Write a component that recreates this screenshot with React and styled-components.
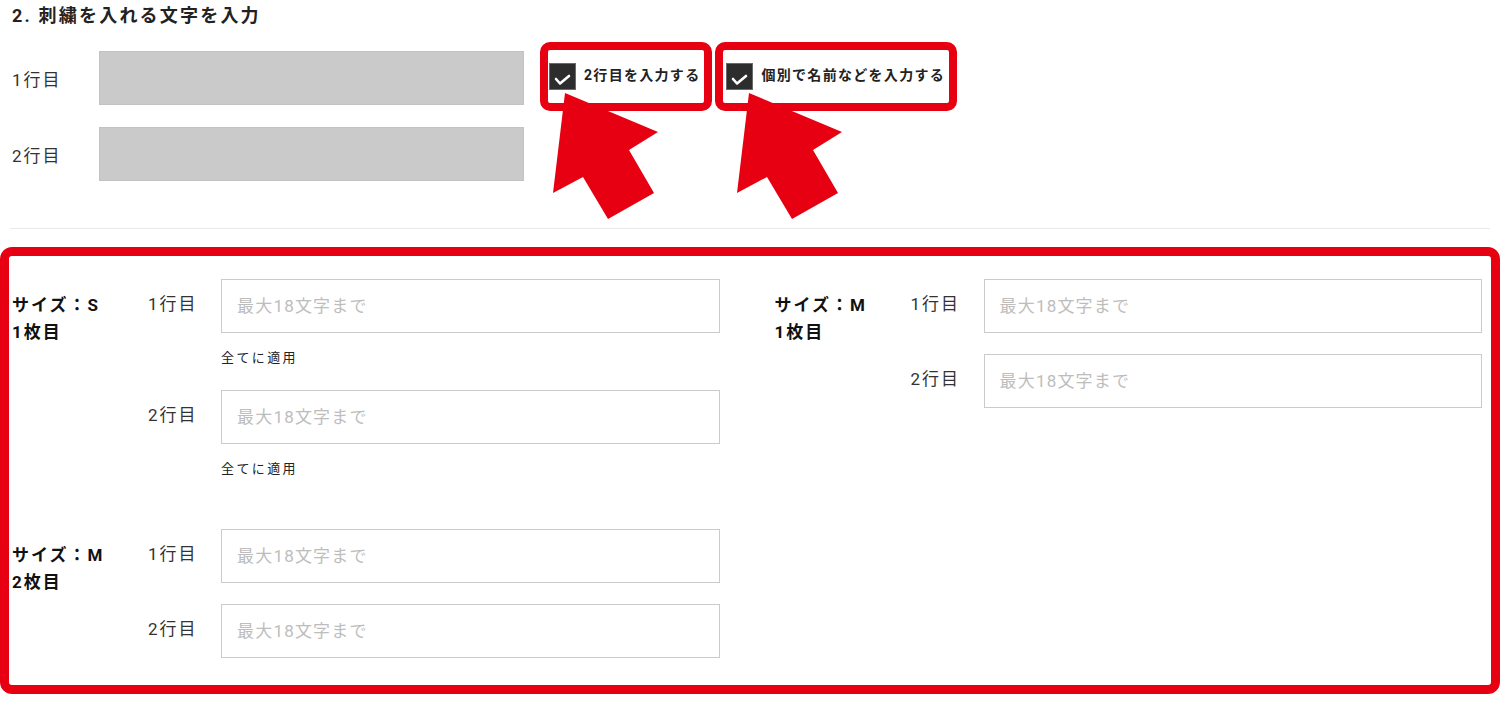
import styled, { createGlobalStyle } from 'styled-components';

const GlobalStyle = createGlobalStyle`
  * { box-sizing: border-box; }
  body {
    margin: 0;
    background: #fff;
    font-family: Roboto, "Noto Sans CJK JP", sans-serif;
    color: #333;
    overflow: hidden;
  }
`;

const Page = styled.div`width: 1500px;`;

const Top = styled.section`position: relative; padding: 4px 12px 0;`;

const Heading = styled.h2`
  margin: 0 0 23px; font-size: 18px; line-height: 24px; font-weight: 700;
  letter-spacing: 2.2px; color: #222;
`;

const TopBody = styled.div`display: flex; align-items: flex-start;`;

const TopRows = styled.div`display: flex; flex-direction: column; gap: 22px;`;

const TopRow = styled.div`display: flex; align-items: center;`;

const TopLabel = styled.span`width: 87px; font-size: 17px; letter-spacing: 2px; color: #333;`;

const GrayField = styled.div`
  width: 425px; height: 54px; background: #cacaca; border: 1px solid #c3c3c3;
`;

const Badges = styled.div`display: flex; gap: 3px; margin: -9px 0 0 16px;`;

const Badge = styled.label`
  display: flex; align-items: center; gap: 8px; height: 69px;
  padding: 0 4px 0 ${p => p.$pl}px;
  border: 8px solid #e60012; border-radius: 10px; background: #fff;
  font-size: 14px; font-weight: 700; letter-spacing: 1.3px; color: #222;
`;

const BadgeText = styled.span`margin-bottom: 6px;`;

const Box = styled.span`
  display: block; width: 27px; height: 27px; background: #2d2d2d; border: 1px solid #6a6a6a;
  svg { display: block; }
`;

const Arrow = styled.svg`position: absolute; top: 93px; left: ${p => p.$x}px; pointer-events: none;`;

const Divider = styled.hr`margin: 47px 10px 18px; border: 0; border-top: 1px solid #e9e9e9;`;

const Frame = styled.section`
  border: 9px solid #e60012; border-radius: 12px;
  padding: 23px 9px 27px 3px;
  display: grid; grid-template-columns: 1fr 1fr; column-gap: 55px;
`;

const Column = styled.div`display: flex; flex-direction: column; gap: 49px;`;

const Group = styled.div`display: flex; align-items: flex-start;`;

const SizeLabel = styled.div`
  width: 136px; padding-top: 13px; font-size: 17px; font-weight: 700; line-height: 27px;
  letter-spacing: 2px; color: #111;
`;

const Rows = styled.div`flex: 1; display: flex; flex-direction: column; gap: 21px;`;

const Row = styled.div`display: flex; align-items: flex-start;`;

const LineLabel = styled.span`
  width: 73px; line-height: 54px; font-size: 17px; letter-spacing: 2px; color: #333;
  margin-top: -2px;
`;

const FieldCol = styled.div`flex: 1; display: flex; flex-direction: column;`;

const Input = styled.input`
  width: 100%; height: 54px; border: 1px solid #cbcbcb; background: #fff;
  padding: 0 15px; font-family: inherit; font-size: 17px; letter-spacing: 1.2px; color: #333;
  &::placeholder { color: #bdbdbd; }
  &:focus { outline: none; }
`;

const Apply = styled.span`
  margin-top: 14px; line-height: 22px; font-size: 13px; letter-spacing: 2.4px; color: #222;
`;

function Check() {
  return (
    <Box>
      <svg width="25" height="25" viewBox="0 0 25 25">
        <polyline points="6,15 10,19.5 19,12" fill="none" stroke="#fff" strokeWidth="2.6" strokeLinecap="round" strokeLinejoin="round" />
      </svg>
    </Box>
  );
}

function BigArrow({ x }) {
  return (
    <Arrow $x={x} width="107" height="128" viewBox="0 0 107 128">
      <polygon points="12,0 105,39 76,57 101,100 55,126 30,84 0,100" fill="#e60012" />
    </Arrow>
  );
}

const groups = [
  [
    { size: 'S', sheet: 1, rows: [{ apply: true }, { apply: true }] },
    { size: 'M', sheet: 2, rows: [{}, {}] },
  ],
  [
    { size: 'M', sheet: 1, rows: [{}, {}] },
  ],
];

export default function App() {
  return (
    <Page>
      <GlobalStyle />
      <Top>
        <Heading>2. 刺繍を入れる文字を入力</Heading>
        <TopBody>
          <TopRows>
            <TopRow><TopLabel>1行目</TopLabel><GrayField /></TopRow>
            <TopRow><TopLabel>2行目</TopLabel><GrayField /></TopRow>
          </TopRows>
          <Badges>
            <Badge $pl={1}><Check /><BadgeText>2行目を入力する</BadgeText></Badge>
            <Badge $pl={3}><Check /><BadgeText>個別で名前などを入力する</BadgeText></Badge>
          </Badges>
        </TopBody>
        <BigArrow x={553} />
        <BigArrow x={737} />
      </Top>
      <Divider />
      <Frame>
        {groups.map((col, ci) => (
          <Column key={ci}>
            {col.map((g, gi) => (
              <Group key={gi}>
                <SizeLabel>サイズ：{g.size}<br />{g.sheet}枚目</SizeLabel>
                <Rows>
                  {g.rows.map((r, ri) => (
                    <Row key={ri}>
                      <LineLabel>{ri + 1}行目</LineLabel>
                      <FieldCol>
                        <Input placeholder="最大18文字まで" />
                        {r.apply && <Apply>全てに適用</Apply>}
                      </FieldCol>
                    </Row>
                  ))}
                </Rows>
              </Group>
            ))}
          </Column>
        ))}
      </Frame>
    </Page>
  );
}
